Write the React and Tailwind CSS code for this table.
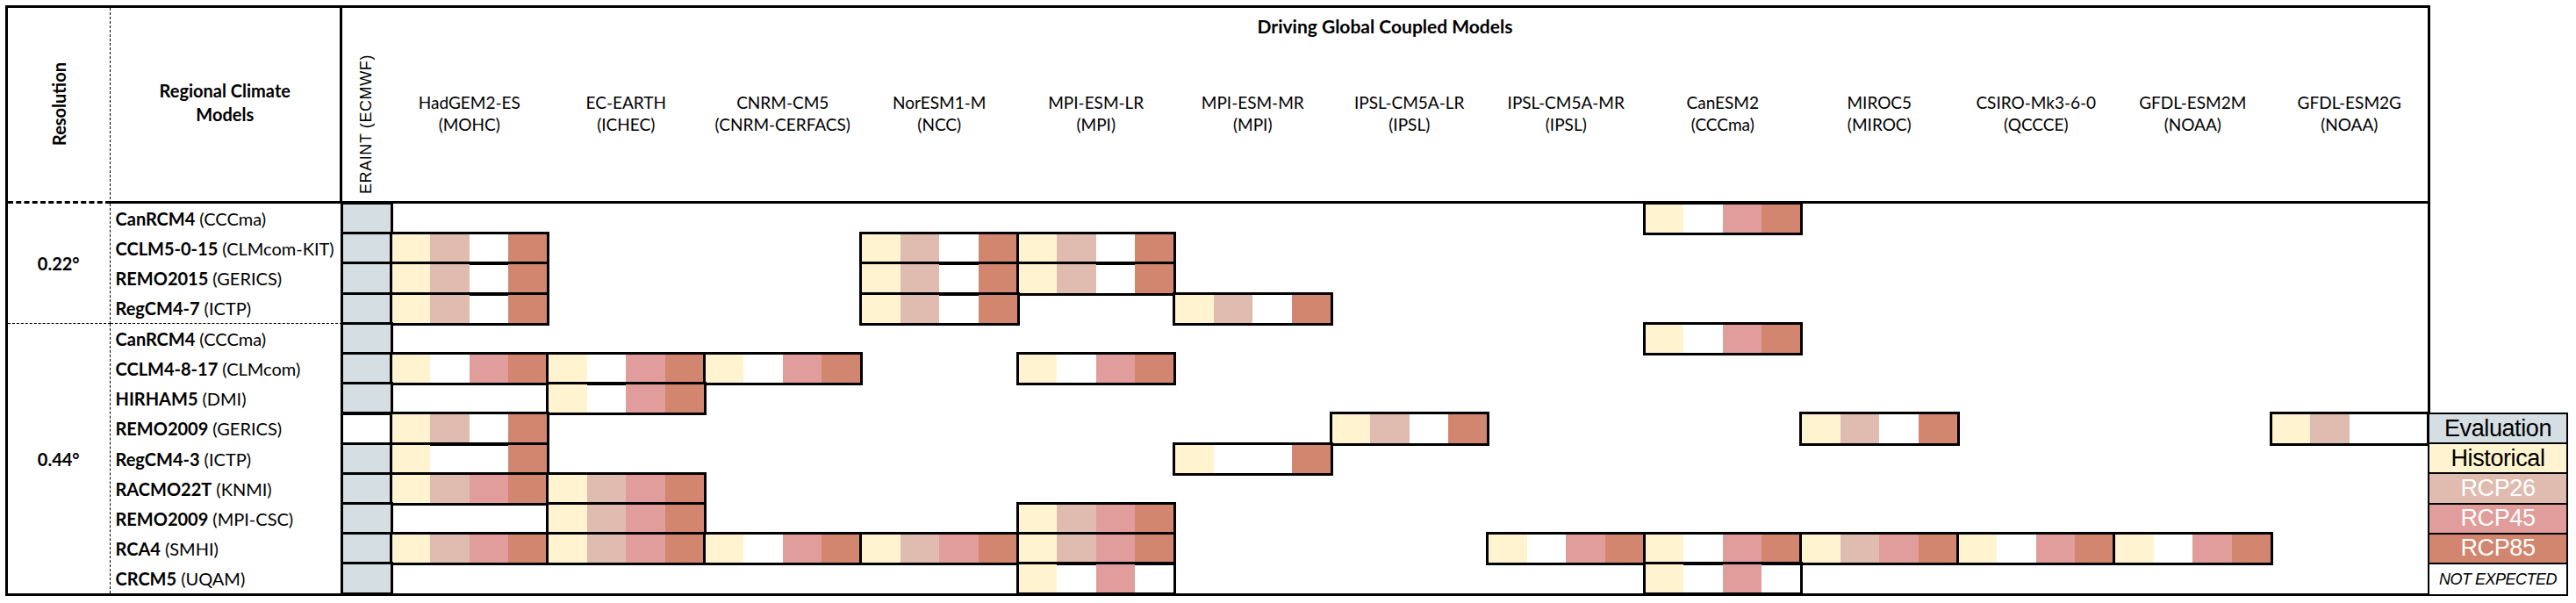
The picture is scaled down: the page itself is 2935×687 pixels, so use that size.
import React from "react";

const gcms = [
  ["HadGEM2-ES", "(MOHC)"],
  ["EC-EARTH", "(ICHEC)"],
  ["CNRM-CM5", "(CNRM-CERFACS)"],
  ["NorESM1-M", "(NCC)"],
  ["MPI-ESM-LR", "(MPI)"],
  ["MPI-ESM-MR", "(MPI)"],
  ["IPSL-CM5A-LR", "(IPSL)"],
  ["IPSL-CM5A-MR", "(IPSL)"],
  ["CanESM2", "(CCCma)"],
  ["MIROC5", "(MIROC)"],
  ["CSIRO-Mk3-6-0", "(QCCCE)"],
  ["GFDL-ESM2M", "(NOAA)"],
  ["GFDL-ESM2G", "(NOAA)"],
];

// Y = historical, 2 = rcp26, 4 = rcp45, 8 = rcp85, - = nothing
const rcms = [
  { name: "CanRCM4", inst: "(CCCma)", eval: true, runs: { 8: "Y-48" } },
  { name: "CCLM5-0-15", inst: "(CLMcom-KIT)", eval: true, runs: { 0: "Y2-8", 3: "Y2-8", 4: "Y2-8" } },
  { name: "REMO2015", inst: "(GERICS)", eval: true, runs: { 0: "Y2-8", 3: "Y2-8", 4: "Y2-8" } },
  { name: "RegCM4-7", inst: "(ICTP)", eval: true, runs: { 0: "Y2-8", 3: "Y2-8", 5: "Y2-8" }, split: true },
  { name: "CanRCM4", inst: "(CCCma)", eval: true, runs: { 8: "Y-48" } },
  { name: "CCLM4-8-17", inst: "(CLMcom)", eval: true, runs: { 0: "Y-48", 1: "Y-48", 2: "Y-48", 4: "Y-48" } },
  { name: "HIRHAM5", inst: "(DMI)", eval: true, runs: { 1: "Y-48" } },
  { name: "REMO2009", inst: "(GERICS)", eval: false, runs: { 0: "Y2-8", 6: "Y2-8", 9: "Y2-8", 12: "Y2--" } },
  { name: "RegCM4-3", inst: "(ICTP)", eval: true, runs: { 0: "Y--8", 5: "Y--8" } },
  { name: "RACMO22T", inst: "(KNMI)", eval: true, runs: { 0: "Y248", 1: "Y248" } },
  { name: "REMO2009", inst: "(MPI-CSC)", eval: true, runs: { 1: "Y248", 4: "Y248" } },
  {
    name: "RCA4",
    inst: "(SMHI)",
    eval: true,
    runs: { 0: "Y248", 1: "Y248", 2: "Y-48", 3: "Y248", 4: "Y248", 7: "Y-48", 8: "Y-48", 9: "Y248", 10: "Y-48", 11: "Y-48" },
  },
  { name: "CRCM5", inst: "(UQAM)", eval: true, runs: { 4: "Y-4-", 8: "Y-4-" } },
];

const fills = {
  Y: "bg-[#fff4cf]",
  2: "bg-[#e0bcb0]",
  4: "bg-[#e19d9b]",
  8: "bg-[#d3866f]",
  "-": "",
};

const box = "outline-[3px] outline-solid outline-black outline-offset-[-1.5px]";

const legend = [
  { label: "Evaluation", cls: "bg-[#d5dfe3] text-black text-[27px] tracking-[-0.4px]" },
  { label: "Historical", cls: "bg-[#fff4cf] text-black text-[27px] tracking-[-0.4px]" },
  { label: "RCP26", cls: "bg-[#e0bcb0] text-white text-[27px] tracking-[-0.4px]" },
  { label: "RCP45", cls: "bg-[#e19d9b] text-white text-[27px] tracking-[-0.4px]" },
  { label: "RCP85", cls: "bg-[#d3866f] text-white text-[27px] tracking-[-0.4px]" },
  { label: "NOT EXPECTED", cls: "bg-white text-black italic text-[18px] tracking-[-0.5px]" },
];

export default function App() {
  return (
    <div className="min-h-screen bg-white flex items-start pt-[6px] pl-[6px] font-['Lato','Open_Sans',sans-serif] text-black">
      {/* Main table */}
      <div className="border-[3px] border-black grid grid-cols-[116.5px_264.5px_55.5px_repeat(13,178.5px)] grid-rows-[41px_182px_repeat(13,34.2px)]">
        {/* Header */}
        <div className="row-span-2 border-r-[1.5px] border-dashed border-black border-b-[3px] border-b-solid flex items-center justify-center">
          <span className="[writing-mode:vertical-rl] rotate-180 font-bold text-[20px]">
            Resolution
          </span>
        </div>
        <div className="row-span-2 border-r-[3px] border-b-[3px] border-black flex items-center justify-center text-center font-bold text-[20px] leading-[27px] pb-[4px]">
          Regional Climate
          <br />
          Models
        </div>
        <div className="col-span-14 flex items-start justify-center pt-[5px] font-bold text-[21px]">
          Driving Global Coupled Models
        </div>
        <div className="border-b-[3px] border-black flex items-end justify-center pb-[8px]">
          <span className="[writing-mode:vertical-rl] rotate-180 text-[18px] font-['Liberation_Sans',sans-serif] tracking-[0.6px]">
            ERAINT (ECMWF)
          </span>
        </div>
        {gcms.map(([m, inst]) => (
          <div
            key={m}
            className="border-b-[3px] border-black flex flex-col items-center justify-center text-center text-[19px] leading-[25px] pb-[22px]"
          >
            <span>{m}</span>
            <span>{inst}</span>
          </div>
        ))}

        {/* Body */}
        <div className="row-span-4 border-r-[1.5px] border-b-[1.5px] border-dashed border-black flex items-center justify-center font-bold text-[20px]">
          0.22°
        </div>
        {rcms.map((r, i) => (
          <React.Fragment key={i}>
            {i === 4 && (
              <div className="row-span-9 border-r-[1.5px] border-dashed border-black flex items-center justify-center font-bold text-[20px]">
                0.44°
              </div>
            )}
            <div
              className={
                "flex items-center pl-[6px] text-[20px] whitespace-nowrap " +
                (r.split ? "border-b-[1.5px] border-dashed border-black" : "")
              }
            >
              <span className="font-bold">{r.name}</span>
              <span className="ml-[5px]">{r.inst}</span>
            </div>
            <div className={(r.eval ? "bg-[#d5dfe3] " : "") + box} />
            {gcms.map((g, j) => {
              const run = r.runs[j];
              if (!run) return <div key={j} />;
              return (
                <div key={j} className={"flex " + box}>
                  {run.split("").map((c, k) => (
                    <div key={k} className={"flex-1 " + fills[c]} />
                  ))}
                </div>
              );
            })}
          </React.Fragment>
        ))}
      </div>

      {/* Legend */}
      <div className="mt-[464px] -ml-[3px] w-[160px] border-[2.5px] border-black flex flex-col divide-y-[2.5px] divide-black font-['Liberation_Sans',sans-serif]">
        {legend.map((l) => (
          <div
            key={l.label}
            className={"h-[34.2px] flex items-center justify-center whitespace-nowrap leading-none " + l.cls}
          >
            {l.label}
          </div>
        ))}
      </div>
    </div>
  );
}
